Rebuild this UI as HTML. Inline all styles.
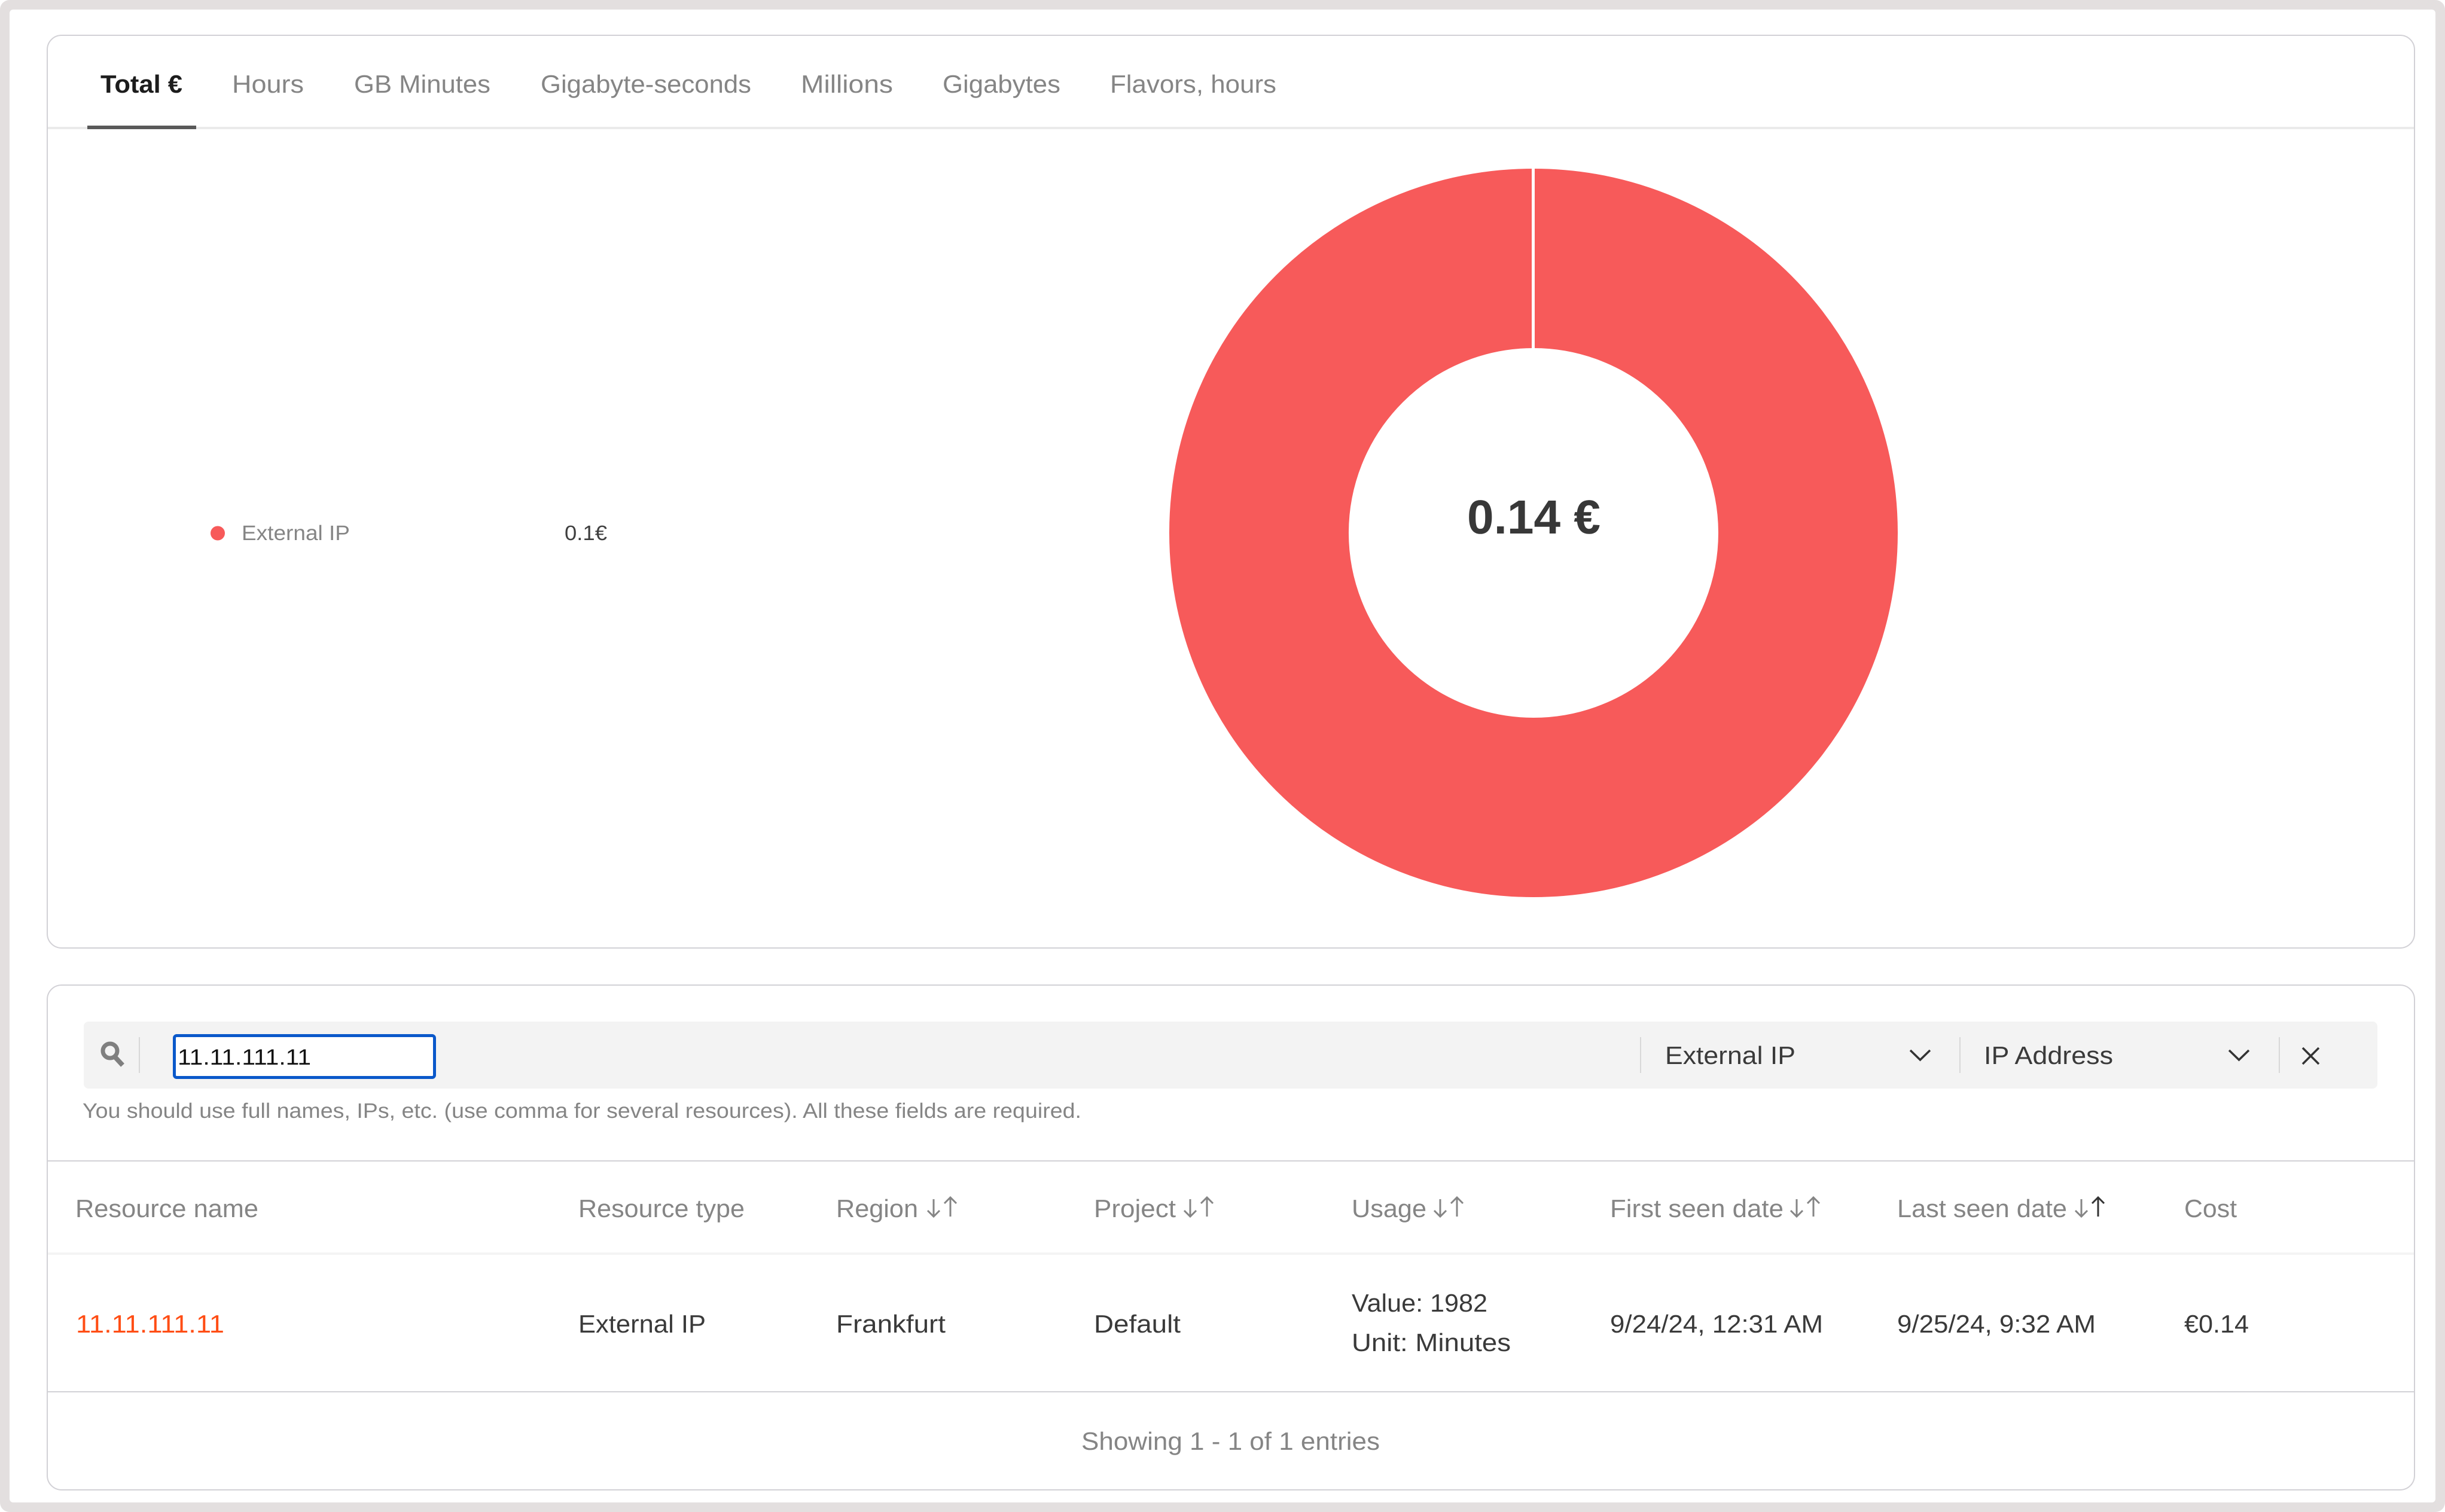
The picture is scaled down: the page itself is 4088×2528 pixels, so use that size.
<!DOCTYPE html>
<html><head><meta charset="utf-8"><title>Usage</title>
<style>
html,body{margin:0;padding:0;background:#fff;width:4088px;height:2528px;overflow:hidden}
svg{display:block}
text{font-family:"Liberation Sans",sans-serif;font-size:42px;text-rendering:geometricPrecision}
.g{fill:#858585}.d{fill:#3a3a3a}
</style></head><body>
<svg xmlns="http://www.w3.org/2000/svg" width="4088" height="2528" viewBox="0 0 4088 2528">
<rect width="4088" height="2528" fill="#fff"/>
<path fill="#e3dfdf" fill-rule="evenodd" d="M16 0H4072A16 16 0 0 1 4088 16V2512A16 16 0 0 1 4072 2528H16A16 16 0 0 1 0 2512V16A16 16 0 0 1 16 0ZM22 16A6 6 0 0 0 16 22V2506A6 6 0 0 0 22 2512H4066A6 6 0 0 0 4072 2506V22A6 6 0 0 0 4066 16Z"/>

<!-- card 1 -->
<rect x="79" y="59" width="3958" height="1526" rx="24" fill="#fff" stroke="#d2d1d6" stroke-width="2"/>
<rect x="80" y="212" width="3956" height="4" fill="#ebebeb"/>
<rect x="146" y="210" width="182" height="6" fill="#595959"/>
<text x="168" y="155" textLength="137" lengthAdjust="spacingAndGlyphs" font-weight="700" fill="#1c1c1c">Total €</text>
<text class="g" x="388" y="155" textLength="120" lengthAdjust="spacingAndGlyphs">Hours</text>
<text class="g" x="592" y="155" textLength="228" lengthAdjust="spacingAndGlyphs">GB Minutes</text>
<text class="g" x="904" y="155" textLength="352" lengthAdjust="spacingAndGlyphs">Gigabyte-seconds</text>
<text class="g" x="1339" y="155" textLength="154" lengthAdjust="spacingAndGlyphs">Millions</text>
<text class="g" x="1576" y="155" textLength="197" lengthAdjust="spacingAndGlyphs">Gigabytes</text>
<text class="g" x="1856" y="155" textLength="278" lengthAdjust="spacingAndGlyphs">Flavors, hours</text>

<!-- legend -->
<circle cx="364" cy="891.5" r="12" fill="#f75a5a"/>
<text x="404" y="903" style="font-size:35px" fill="#858585" textLength="181" lengthAdjust="spacingAndGlyphs">External IP</text>
<text x="944" y="903" style="font-size:35px" fill="#3f3f3f" textLength="71" lengthAdjust="spacingAndGlyphs">0.1€</text>

<!-- donut -->
<circle cx="2564" cy="891" r="459" fill="none" stroke="#f75a5a" stroke-width="300"/>
<rect x="2561" y="280" width="5" height="303" fill="#fff"/>
<text x="2453" y="892" style="font-size:80px" font-weight="700" fill="#383838" textLength="223" lengthAdjust="spacingAndGlyphs">0.14 €</text>

<!-- card 2 -->
<rect x="79" y="1647" width="3958" height="844" rx="24" fill="#fff" stroke="#d2d1d6" stroke-width="2"/>
<rect x="140" y="1708" width="3835" height="112" rx="8" fill="#f3f3f3"/>
<circle cx="184" cy="1757" r="12" fill="none" stroke="#7f7f7f" stroke-width="7"/>
<path d="M192 1767L205 1781" stroke="#7f7f7f" stroke-width="8" fill="none"/>
<rect x="232" y="1734" width="2" height="60" fill="#d8d8d8"/>
<rect x="291.500" y="1731.500" width="435" height="70" rx="4" fill="#fff" stroke="#0a58ca" stroke-width="5"/>
<text x="297" y="1780" style="font-size:37px" fill="#111" textLength="223" lengthAdjust="spacingAndGlyphs">11.11.111.11</text>
<rect x="2742" y="1734" width="2" height="60" fill="#d8d8d8"/>
<rect x="3276" y="1734" width="2" height="60" fill="#d8d8d8"/>
<rect x="3810" y="1734" width="2" height="60" fill="#d8d8d8"/>
<text class="d" x="2784" y="1779" textLength="218" lengthAdjust="spacingAndGlyphs">External IP</text>
<text class="d" x="3317" y="1779" textLength="216" lengthAdjust="spacingAndGlyphs">IP Address</text>
<path d="M3194 1756L3210.500 1772L3227 1756M3727 1756L3743.500 1772L3760 1756" fill="none" stroke="#333" stroke-width="3.500"/>
<path d="M3850 1752L3877 1779M3877 1752L3850 1779" fill="none" stroke="#333" stroke-width="3.500"/>
<text x="138" y="1869" style="font-size:35px" fill="#858585" textLength="1670" lengthAdjust="spacingAndGlyphs">You should use full names, IPs, etc. (use comma for several resources). All these fields are required.</text>

<!-- table -->
<rect x="80" y="1940" width="3956" height="2" fill="#d2d1d6"/>
<rect x="80" y="2094" width="3956" height="4" fill="#f4f4f4"/>
<rect x="80" y="2326" width="3956" height="2" fill="#d2d1d6"/>
<text class="g" x="126" y="2035" textLength="306" lengthAdjust="spacingAndGlyphs">Resource name</text>
<text class="g" x="967" y="2035" textLength="278" lengthAdjust="spacingAndGlyphs">Resource type</text>
<text class="g" x="1398" y="2035" textLength="137" lengthAdjust="spacingAndGlyphs">Region</text>
<text class="g" x="1829" y="2035" textLength="137" lengthAdjust="spacingAndGlyphs">Project</text>
<text class="g" x="2260" y="2035" textLength="125" lengthAdjust="spacingAndGlyphs">Usage</text>
<text class="g" x="2692" y="2035" textLength="290" lengthAdjust="spacingAndGlyphs">First seen date</text>
<text class="g" x="3172" y="2035" textLength="284" lengthAdjust="spacingAndGlyphs">Last seen date</text>
<text class="g" x="3652" y="2035" textLength="88" lengthAdjust="spacingAndGlyphs">Cost</text>
<g fill="none" stroke="#858585" stroke-width="3">
<path d="M1561 2005V2034M1551 2024L1561 2034L1571 2024M1589 2034V2002M1579 2012L1589 2002L1599 2012"/>
<path d="M1990 2005V2034M1980 2024L1990 2034L2000 2024M2018 2034V2002M2008 2012L2018 2002L2028 2012"/>
<path d="M2408 2005V2034M2398 2024L2408 2034L2418 2024M2436 2034V2002M2426 2012L2436 2002L2446 2012"/>
<path d="M3004 2005V2034M2994 2024L3004 2034L3014 2024M3032 2034V2002M3022 2012L3032 2002L3042 2012"/>
<path d="M3480 2005V2034M3470 2024L3480 2034L3490 2024"/>
<path stroke="#333" d="M3508 2034V2002M3498 2012L3508 2002L3518 2012"/>
</g>
<text x="127" y="2228" fill="#ff4d14" textLength="248" lengthAdjust="spacingAndGlyphs">11.11.111.11</text>
<text class="d" x="967" y="2228" textLength="213" lengthAdjust="spacingAndGlyphs">External IP</text>
<text class="d" x="1398" y="2228" textLength="183" lengthAdjust="spacingAndGlyphs">Frankfurt</text>
<text class="d" x="1829" y="2228" textLength="145" lengthAdjust="spacingAndGlyphs">Default</text>
<text class="d" x="2260" y="2193" textLength="227" lengthAdjust="spacingAndGlyphs">Value: 1982</text>
<text class="d" x="2260" y="2259" textLength="266" lengthAdjust="spacingAndGlyphs">Unit: Minutes</text>
<text class="d" x="2692" y="2228" textLength="356" lengthAdjust="spacingAndGlyphs">9/24/24, 12:31 AM</text>
<text class="d" x="3172" y="2228" textLength="332" lengthAdjust="spacingAndGlyphs">9/25/24, 9:32 AM</text>
<text class="d" x="3652" y="2228" textLength="108" lengthAdjust="spacingAndGlyphs">€0.14</text>
<text class="g" x="1808" y="2424" textLength="499" lengthAdjust="spacingAndGlyphs">Showing 1 - 1 of 1 entries</text>
</svg>
</body></html>
